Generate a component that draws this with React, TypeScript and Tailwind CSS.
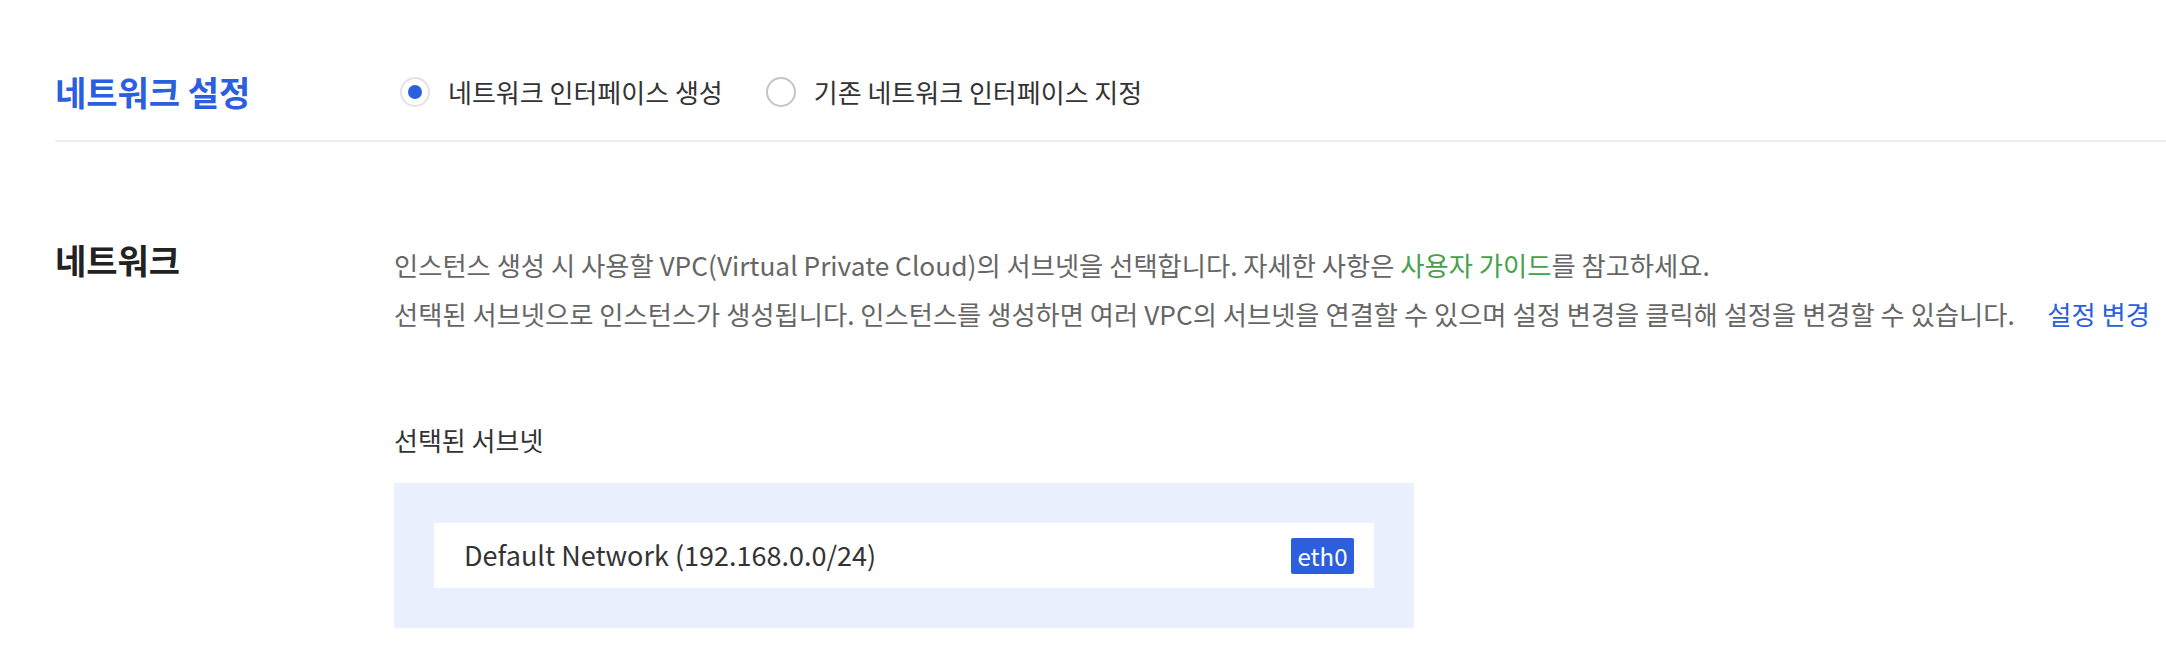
const FONT = '"Noto Sans CJK KR", "Noto Sans", sans-serif';

function Radio({ checked, label }: { checked?: boolean; label: string }) {
  return (
    <label className="flex items-center gap-[18px] cursor-pointer">
      <span
        className={`flex h-[30px] w-[30px] items-center justify-center rounded-full border-2 bg-white ${
          checked ? 'border-[#e2e2e2]' : 'border-[#c4c4c4]'
        }`}
      >
        {checked && <span className="h-[14px] w-[14px] rounded-full bg-[#2b5fde]" />}
      </span>
      <span className="text-[26px] leading-[30px] text-[#333]">{label}</span>
    </label>
  );
}

export default function App() {
  return (
    <div className="h-[658px] w-full overflow-hidden bg-white" style={{ fontFamily: FONT }}>
      {/* 네트워크 설정 */}
      <div className="pl-[55px] pt-[77px]">
        <div className="flex items-center">
          <h2 className="w-[345px] text-[34px] font-bold leading-[30px] text-[#2b5fde]">네트워크 설정</h2>
          <div className="flex items-center gap-[43px]">
            <Radio checked label="네트워크 인터페이스 생성" />
            <Radio label="기존 네트워크 인터페이스 지정" />
          </div>
        </div>
        <div className="mt-[33px] h-[2px] bg-[#eeeeee]" />
      </div>

      {/* 네트워크 */}
      <div className="flex pl-[55px] pt-[100px]">
        <h3 className="w-[339px] shrink-0 text-[34px] font-bold leading-[36px] text-[#222]">네트워크</h3>
        <div className="flex-1 pt-[5px]">
          <p className="text-[26.3px] leading-[36px] text-[#666]">
            인스턴스 생성 시 사용할 VPC(Virtual Private Cloud)의 서브넷을 선택합니다. 자세한 사항은{' '}
            <a className="text-[#46a14a]">사용자 가이드</a>를 참고하세요.
          </p>
          <div className="mt-[13px] flex pr-[16px] text-[26.3px] leading-[36px]">
            <p className="whitespace-nowrap text-[#666]">
              선택된 서브넷으로 인스턴스가 생성됩니다. 인스턴스를 생성하면 여러 VPC의 서브넷을 연결할 수 있으며 설정 변경을 클릭해 설정을 변경할 수 있습니다.
            </p>
            <a className="ml-auto whitespace-nowrap text-[#2b5fde]">설정 변경</a>
          </div>

          <p className="mt-[90px] text-[26px] leading-[36px] text-[#333]">선택된 서브넷</p>

          <div className="mt-[25px] w-[1020px] bg-[#eaf0fd] p-[40px]">
            <div className="flex h-[65px] items-center justify-between bg-white pl-[30px] pr-[20px]">
              <span className="text-[27px] text-[#333]">Default Network (192.168.0.0/24)</span>
              <span className="flex h-[36px] w-[63px] items-center justify-center rounded-[2px] bg-[#2d5fdd] text-[24px] text-white">
                eth0
              </span>
            </div>
          </div>
        </div>
      </div>
    </div>
  );
}
